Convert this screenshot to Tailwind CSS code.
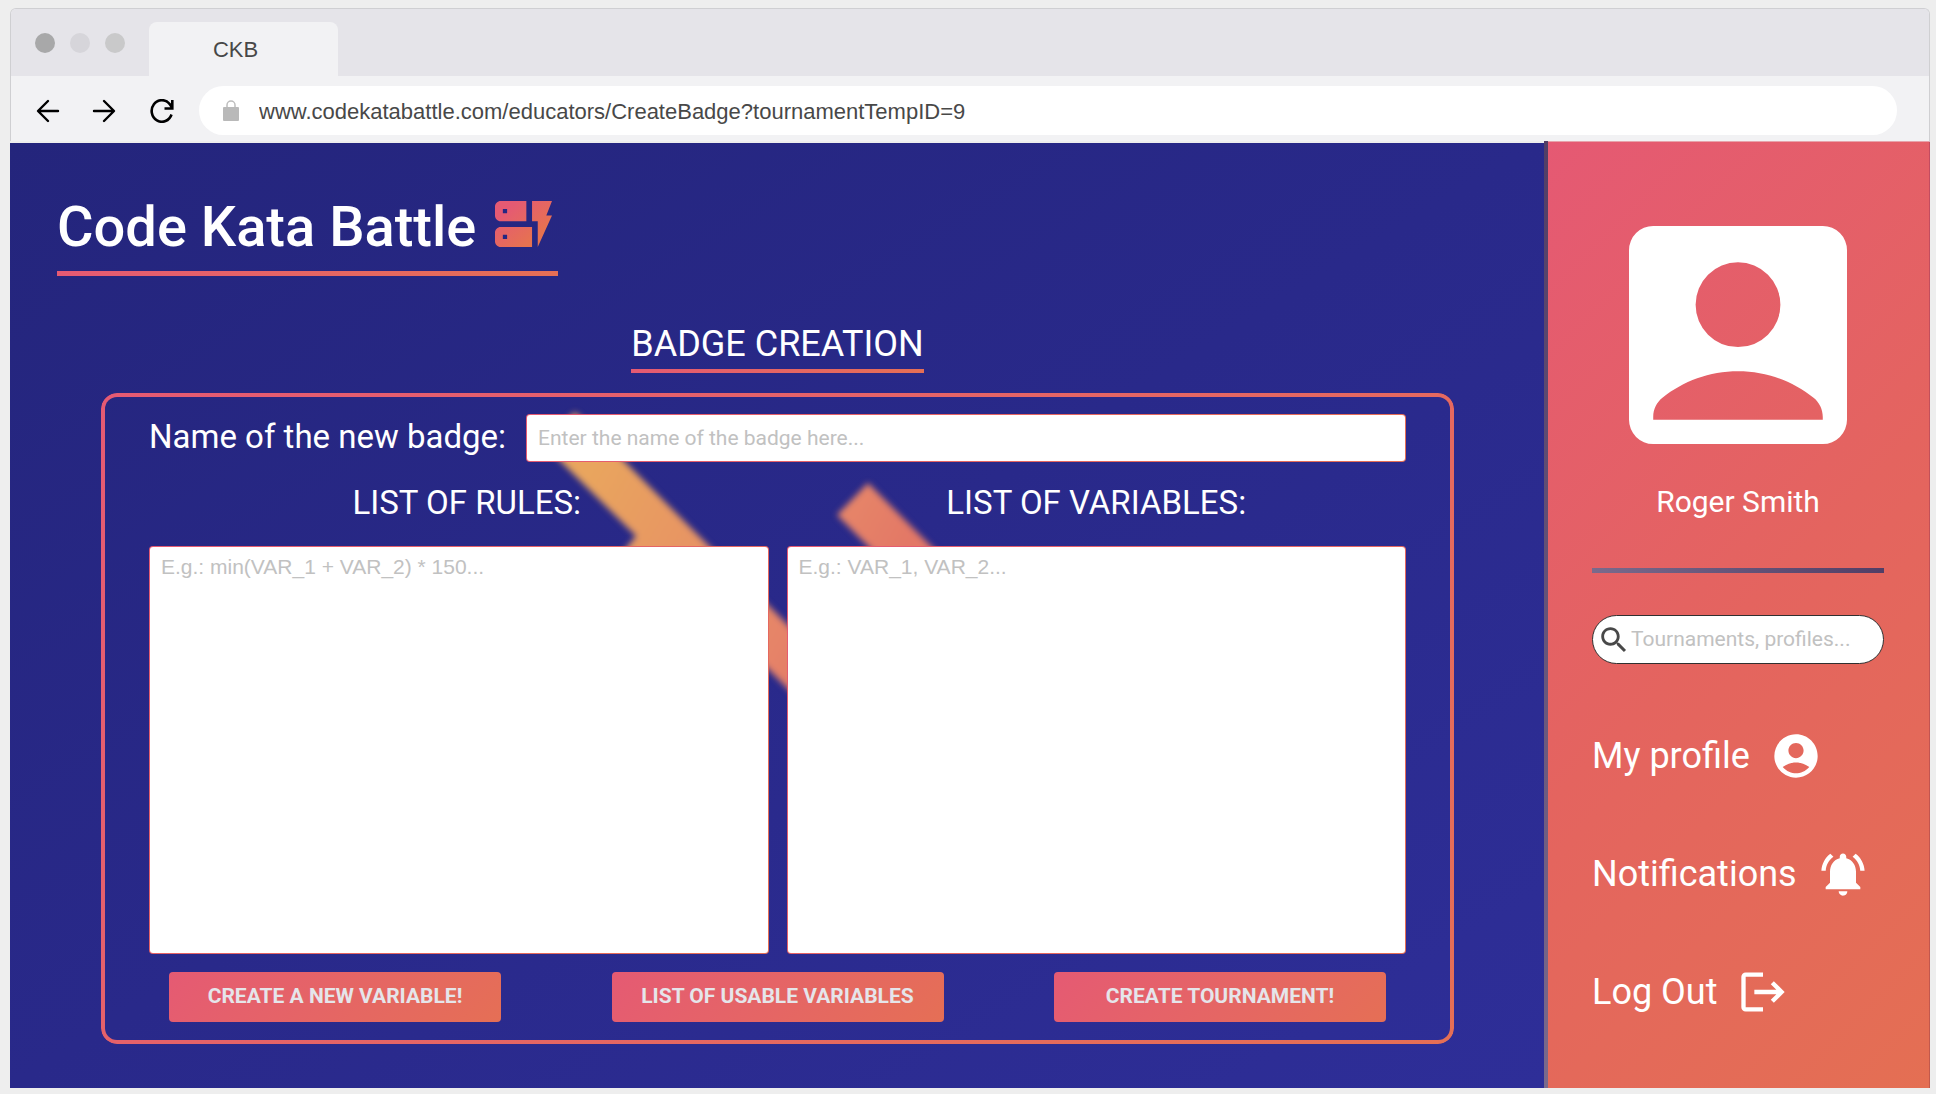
<!DOCTYPE html>
<html lang="en">
<head>
<meta charset="utf-8">
<meta name="viewport" content="width=device-width, initial-scale=1">
<title>CKB</title>
<script src="https://cdn.jsdelivr.net/npm/@tailwindcss/browser@4"></script>
</head>
<body class="bg-[#eeeeee] font-[Roboto,sans-serif]">
<div class="flex min-h-screen flex-col pt-2 pr-1.5 pb-1.5 pl-2.5">

  <!-- Browser chrome -->
  <header class="overflow-hidden rounded-t-md border border-b-0 border-[#cfcfd2] bg-[#f2f2f4] font-['Liberation_Sans',Arial,sans-serif] text-[22px] text-[#484848]">
    <div class="flex h-[67px] items-end bg-[#e5e4e9]">
      <div class="flex gap-[15px] self-center px-6">
        <span class="h-5 w-5 rounded-full bg-[#a8a8a9]"></span>
        <span class="h-5 w-5 rounded-full bg-[#d6d5da]"></span>
        <span class="h-5 w-5 rounded-full bg-[#c9c9ca]"></span>
      </div>
      <div class="flex h-[54px] w-[189px] items-center justify-center rounded-t-lg bg-[#f2f2f4] pr-4">CKB</div>
    </div>
    <div class="flex h-[65px] items-center pt-1 pr-8 pl-6">
      <div class="flex items-center gap-8 pl-px text-black">
        <button type="button" aria-label="Back" class="block"><svg class="h-6 w-6" viewBox="0 0 24 24" fill="none" stroke="currentColor" stroke-width="2.400" stroke-linecap="round" stroke-linejoin="round"><path d="M22 12H2.500M12 2 2 12l10 10"/></svg></button>
        <button type="button" aria-label="Forward" class="block"><svg class="h-6 w-6" viewBox="0 0 24 24" fill="none" stroke="currentColor" stroke-width="2.400" stroke-linecap="round" stroke-linejoin="round"><path d="M2 12h19.500M12 2l10 10-10 10"/></svg></button>
        <button type="button" aria-label="Reload" class="ml-0.5 block"><svg class="h-6 w-6" viewBox="0 0 24 24" fill="none" stroke="currentColor" stroke-width="2.600"><path d="M21.500 15.500A10.200 10.800 0 1 1 19.500 4.800L22 8.500M22.300 1v8.500H14.500"/></svg></button>
      </div>
      <label class="ml-[25px] flex h-[49px] flex-1 items-center gap-5 rounded-full bg-white px-6">
        <svg class="h-[22px] w-4" viewBox="0 0 16 22" fill="none"><path d="M4 9V5a4 4 0 0 1 8 0v4" stroke="#bdbdbd" stroke-width="1.500"/><rect y="7" width="16" height="14" rx="1" fill="#b9b9b9"/></svg>
        <input type="text" aria-label="Address" value="www.codekatabattle.com/educators/CreateBadge?tournamentTempID=9" class="min-w-0 flex-1 bg-transparent pt-0.5 outline-none">
      </label>
    </div>
  </header>

  <div class="flex flex-1">
    <!-- Page content -->
    <main class="relative mt-0.5 flex flex-1 flex-col overflow-hidden bg-gradient-to-br from-[#24257c] via-[#29298a] to-[#2e2e98] text-white">
      <svg class="pointer-events-none absolute top-0 left-0 h-[700px] w-[1100px] blur-[3px]" viewBox="0 0 1100 700" aria-hidden="true">
        <defs>
          <linearGradient id="beam" gradientUnits="userSpaceOnUse" x1="580" y1="327" x2="849" y2="483">
            <stop offset="0" stop-color="#e9a55e"/><stop offset=".79" stop-color="#e68468"/><stop offset="1" stop-color="#e37866"/>
          </linearGradient>
        </defs>
        <g fill="url(#beam)">
          <path d="M565 269 863 567 831 599 675 443 500 620 468 588 626 393 533 301z"/>
          <path d="M858 340 998 480 966 512 827 372z"/>
        </g>
      </svg>

      <div class="relative flex flex-1 flex-col pr-[90px] pb-11 pl-[91px]">
        <h1 class="-ml-11 mt-[50px] flex h-[83px] w-fit items-start gap-[19px] border-b-[5px] border-transparent pr-1.5 text-[56px] leading-[68px] font-medium [border-image:linear-gradient(to_right,#e55a73,#e56f55)_1]">
          Code Kata Battle
          <svg class="mt-2 h-[46px] w-[57px]" viewBox="2 4 20 16" preserveAspectRatio="none" aria-hidden="true">
            <defs><linearGradient id="mark" x1="0" y1="0" x2="1" y2="1"><stop offset=".2" stop-color="#e55a73"/><stop offset=".75" stop-color="#e67250"/></linearGradient></defs>
            <path fill="url(#mark)" fill-rule="evenodd" d="M17 20v-9h-2V4h7l-2 5h2L17 20zM15 13v7H4c-1.100 0-2-.9-2-2v-3c0-1.100.9-2 2-2H15zM6.250 15.750h-1.500v1.500h1.500V15.750zM13 4v7H4C2.900 11 2 10.100 2 9V6c0-1.100.9-2 2-2H13zM6.250 6.750h-1.500v1.500h1.500V6.750z"/>
          </svg>
        </h1>

        <h2 class="mt-[46px] h-[51px] self-center border-b-4 border-transparent text-4xl leading-[44px] [border-image:linear-gradient(to_right,#e55a73,#e56f55)_1]">BADGE CREATION</h2>

        <form class="relative mt-5 flex flex-1 flex-col px-12 pt-[21px] pb-[22px]">
          <div class="pointer-events-none absolute inset-0 rounded-2xl bg-linear-135 from-[#e55a73] to-[#e56f55] p-1 [mask:linear-gradient(#000_0_0)_content-box_exclude,linear-gradient(#000_0_0)]"></div>
          <div class="flex items-start gap-5">
            <label for="badge-name" class="text-[33px] leading-[46px]">Name of the new badge:</label>
            <input id="badge-name" type="text" placeholder="Enter the name of the badge here..." class="h-12 min-w-0 flex-1 rounded-sm border border-transparent px-[11px] text-[21px] text-[#484848] outline-none [background:linear-gradient(#fff,#fff)_padding-box,linear-gradient(135deg,#e55a73,#e56f55)_border-box] placeholder:text-[#c1c1c1]">
          </div>
          <div class="mt-5 grid flex-1 grid-cols-2 gap-x-[18px]">
            <div class="flex flex-col">
              <label for="rules" class="pl-4 text-center text-[33px] leading-[42px]">LIST OF RULES:</label>
              <textarea id="rules" placeholder="E.g.: min(VAR_1 + VAR_2) * 150..." class="mt-[22px] min-h-60 flex-1 resize-none rounded-sm border border-transparent px-[11px] py-2 font-['Liberation_Sans',Arial,sans-serif] text-[21px] leading-6 text-[#484848] outline-none [background:linear-gradient(#fff,#fff)_padding-box,linear-gradient(135deg,#e55a73,#e56f55)_border-box] placeholder:text-[#c1c1c1]"></textarea>
            </div>
            <div class="flex flex-col">
              <label for="variables" class="text-center text-[33px] leading-[42px]">LIST OF VARIABLES:</label>
              <textarea id="variables" placeholder="E.g.: VAR_1, VAR_2..." class="mt-[22px] min-h-60 flex-1 resize-none rounded-sm border border-transparent px-[11px] py-2 font-['Liberation_Sans',Arial,sans-serif] text-[21px] leading-6 text-[#484848] outline-none [background:linear-gradient(#fff,#fff)_padding-box,linear-gradient(135deg,#e55a73,#e56f55)_border-box] placeholder:text-[#c1c1c1]"></textarea>
            </div>
          </div>
          <div class="mt-[18px] flex justify-between px-5 text-[21px] font-bold text-[#e5e5ea]">
            <button type="button" class="h-[50px] w-[332px] rounded-sm bg-linear-135 from-[#e55a73] to-[#e56f55]">CREATE A NEW VARIABLE!</button>
            <button type="button" class="h-[50px] w-[332px] rounded-sm bg-linear-135 from-[#e55a73] to-[#e56f55]">LIST OF USABLE VARIABLES</button>
            <button type="submit" class="h-[50px] w-[332px] rounded-sm bg-linear-135 from-[#e55a73] to-[#e56f55]">CREATE TOURNAMENT!</button>
          </div>
        </form>
      </div>
    </main>

    <!-- Sidebar -->
    <div class="w-1 bg-gradient-to-b from-[#513e66] to-[#7a6a8c]"></div>
    <aside class="w-[382px] border-t border-r border-t-[#e7a3ab] border-r-black/15 bg-linear-135 from-[#e55973] via-[#e4645f] to-[#e46f53] pt-[84px] pr-[45px] pl-11 text-white">
      <svg class="mx-auto h-[218px] w-[218px]" viewBox="3 3 18 18" role="img" aria-label="Profile picture" fill="#fff" fill-rule="evenodd"><path d="M5 3h14a2 2 0 0 1 2 2v14a2 2 0 0 1-2 2H5a2 2 0 0 1-2-2V5a2 2 0 0 1 2-2zM12 6a3.500 3.500 0 1 0 0 7 3.500 3.500 0 0 0 0-7zM5 19v-.23c0-.62.28-1.200.76-1.580C7.470 15.820 9.640 15 12 15s4.530.82 6.240 2.190c.48.38.76.97.76 1.580V19z"/></svg>
      <p class="mt-[37px] text-center text-3xl leading-[42px]">Roger Smith</p>
      <div class="mt-[45px] h-[5px] bg-gradient-to-r from-[#7a6a8c] to-[#513e66]"></div>
      <label class="mt-[42px] flex h-[49px] items-center rounded-full border border-[#303030] bg-white pr-1 pl-1">
        <svg class="h-[34px] w-[34px] shrink-0" viewBox="0 0 24 24" fill="#484848" aria-hidden="true"><path d="M15.500 14h-.79l-.28-.27C15.410 12.590 16 11.110 16 9.500 16 5.910 13.090 3 9.500 3S3 5.910 3 9.500 5.910 16 9.500 16c1.610 0 3.090-.59 4.230-1.570l.27.28v.79l5 4.990L20.490 19l-4.990-5zm-6 0C7.010 14 5 11.990 5 9.500S7.010 5 9.500 5 14 7.010 14 9.500 11.990 14 9.500 14z"/></svg>
        <input type="search" aria-label="Search" placeholder="Tournaments, profiles..." class="min-w-0 flex-1 bg-transparent text-[21px] text-[#484848] outline-none placeholder:text-[#c1c1c1]">
      </label>
      <nav class="mt-[66px] flex flex-col gap-[66px] text-4xl leading-[52px]">
        <a href="#profile" class="flex items-center gap-5">My profile
          <svg class="h-[52px] w-[52px]" viewBox="0 0 24 24" fill="currentColor" aria-hidden="true"><path d="M12 2C6.480 2 2 6.480 2 12s4.480 10 10 10 10-4.480 10-10S17.520 2 12 2zm0 4c1.930 0 3.500 1.570 3.500 3.500S13.930 13 12 13s-3.500-1.570-3.500-3.500S10.070 6 12 6zm0 14c-2.030 0-4.430-.82-6.140-2.880C7.550 15.800 9.680 15 12 15s4.450.8 6.140 2.120C16.430 19.180 14.030 20 12 20z"/></svg>
        </a>
        <a href="#notifications" class="flex items-center gap-5">Notifications
          <svg class="h-[52px] w-[52px]" viewBox="0 0 24 24" fill="currentColor" aria-hidden="true"><path d="M7.580 4.080L6.150 2.650C3.750 4.480 2.170 7.300 2.030 10.500h2c.15-2.650 1.510-4.970 3.550-6.420zm12.390 6.420h2c-.15-3.200-1.730-6.020-4.120-7.850l-1.420 1.430c2.020 1.450 3.390 3.770 3.540 6.420zM18 11c0-3.070-1.640-5.640-4.500-6.320V4c0-.83-.67-1.500-1.500-1.500s-1.500.67-1.500 1.500v.68C7.630 5.360 6 7.920 6 11v5l-2 2v1h16v-1l-2-2v-5zm-6 11c.14 0 .27-.01.4-.04.65-.14 1.180-.58 1.440-1.180.1-.24.15-.5.15-.78h-4c.01 1.100.9 2 2.010 2z"/></svg>
        </a>
        <a href="#logout" class="flex items-center gap-5">Log Out
          <svg class="h-[52px] w-[52px]" viewBox="0 0 24 24" fill="currentColor" aria-hidden="true"><path d="M12 5H4v14h8v2H4c-1.100 0-2-.9-2-2V5c0-1.100.9-2 2-2h8zM17 7l-1.410 1.410L18.170 11H8v2h10.170l-2.580 2.580L17 17l5-5z"/></svg>
        </a>
      </nav>
    </aside>
  </div>
</div>
</body>
</html>
